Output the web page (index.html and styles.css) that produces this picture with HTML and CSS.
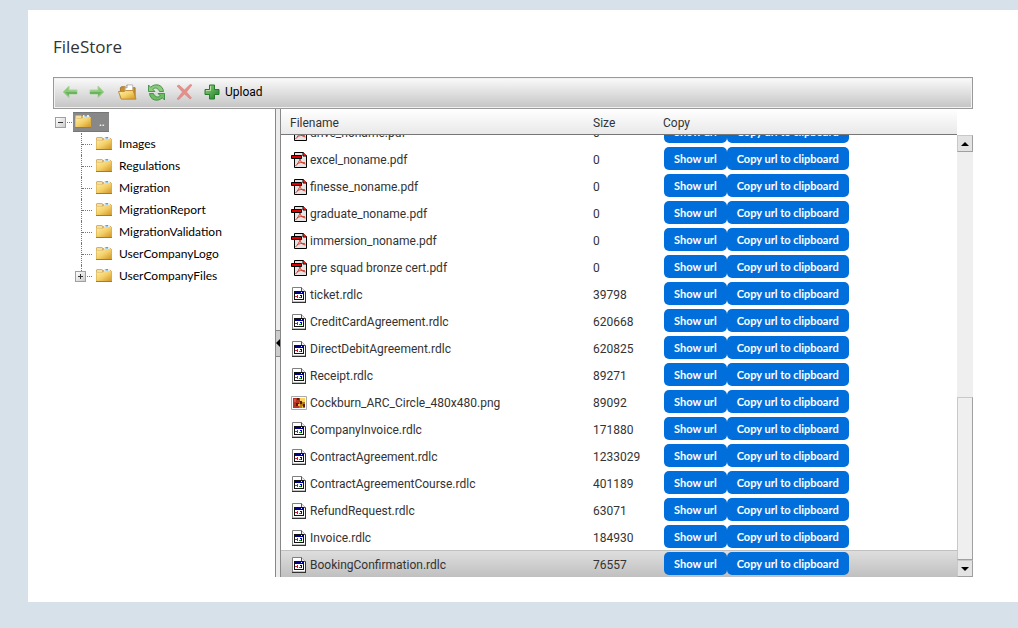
FILE: index.html
```html
<!DOCTYPE html>
<html lang="en">
<head>
<meta charset="utf-8">
<title>FileStore</title>
<link rel="stylesheet" href="styles.css">
</head>
<body>
<svg class="defs" aria-hidden="true">
  <defs>
    <linearGradient id="gold" x1="0" y1="0" x2="1" y2="1"><stop offset="0" stop-color="#fff0a8"/><stop offset=".5" stop-color="#f3cf68"/><stop offset="1" stop-color="#cf9220"/></linearGradient>
    <linearGradient id="green" x1="0" y1="0" x2="1" y2="1"><stop offset="0" stop-color="#8fd67c"/><stop offset="1" stop-color="#1c7a24"/></linearGradient>
    <symbol id="folder" viewBox="0 0 16 16">
      <path d="M0 12V2l1-1h5l1 1h8v10z" fill="#d6b06a"/>
      <path d="M8 1h6v3H8z" fill="#e8eef0"/><path d="M9.500 1h2.500v1.500H9.500z" fill="#48a6dc"/>
      <path d="M1 2h5v2H1z" fill="#f3dfa0"/>
      <path d="M0 13.500V4.500h7l1.500-1.500H16v10.500z" fill="url(#gold)"/>
      <path d="M.5 13V4.500M15.500 3v10" stroke="#d9ab4c" stroke-opacity=".6"/>
      <path d="M0 13.500h16" stroke="#b07a18"/>
    </symbol>
    <symbol id="pdf" viewBox="0 0 16 16">
      <path d="M3.500 .5h8.500l3.500 3.500v11.500h-12z" fill="#e4e4e4" stroke="#000"/>
      <path d="M12 0v4h4" fill="#e00000" stroke="#000"/><path d="M12.500 1l2.500 2.500h-2.500z" fill="#f22"/>
      <path d="M.5 3.500h10v3H.5z" fill="#e00000" stroke="#000"/>
      <path d="M9 7c-.5 2-2.500 5-4.500 7M9 7c.3 2.500 2 4.500 5.500 5M6 12c2-1.500 5-2 8-1.200" fill="none" stroke="#d43a2c"/>
    </symbol>
    <symbol id="rdlc" viewBox="0 0 16 16">
      <path d="M1.500 .5h9l4 4v10.500h-13z" fill="#fff" stroke="#808080"/>
      <path d="M14.500 4.500v11M1 15.500h14" fill="none" stroke="#333"/>
      <path d="M10.500 .5v4h4" fill="#eee" stroke="#555"/>
      <path d="M3 4h10v9H3z" fill="#111"/><path d="M4 7h8v5H4z" fill="#fff"/><path d="M4 5h8v2H4z" fill="#000090"/><path d="M10 5h1v1h-1z" fill="#fff"/>
      <path d="M4 9h1v1H4z" fill="#008f8f"/><path d="M6 8h1v3H6zM5 9h1v1H5z" fill="#d12"/><path d="M8 10h2v1H8z" fill="#0a0"/><path d="M9 8h2v1H9zM10 9h1v2h-1z" fill="#00c"/>
    </symbol>
    <symbol id="png" viewBox="0 0 16 16">
      <path d="M.5 1.500h15v13H.5z" fill="#fff" stroke="#aaa"/><path d="M2 3h12v10H2z" fill="#b83422"/>
      <path d="M9 3h5v5H9z" fill="#f5d35c"/><path d="M8 7h6v6H8z" fill="#b57b12"/><path d="M9 6h2v3H9zM12 9h2v3h-2zM5 8h3v3H5zM6 3h2v2H6z" fill="#5a1b13"/><path d="M3 4h2v3H3z" fill="#da5542"/><path d="M7 9h2v2H7zM11 11h1v2h-1z" fill="#f3bd30"/>
    </symbol>
  </defs>
</svg>
<main class="panel">
  <h1 class="title">FileStore</h1>
  <section class="explorer">
    <div class="toolbar" role="toolbar" aria-label="File actions">
      <button class="tool" type="button" aria-label="Back"><svg width="16" height="16" viewBox="0 0 16 16"><path d="M1 8l6-6v4h8v4H7v4z" fill="#8bc97b" stroke="#a9d69d"/><path d="M3 8h12v2H7v2z" fill="#6bb35f"/></svg></button>
      <button class="tool" type="button" aria-label="Forward"><svg width="16" height="16" viewBox="0 0 16 16"><path d="M15 8L9 2v4H1v4h8v4z" fill="#8bc97b" stroke="#a9d69d"/><path d="M13 8H1v2h8v2z" fill="#6bb35f"/></svg></button>
      <button class="tool tool-wide" type="button" aria-label="New folder"><svg width="19" height="16" viewBox="0 0 20 16"><path d="M2.500 14V3.500l1-1h4l1 1h9.500V14z" fill="#c98f2c" stroke="#a87628"/><path d="M7.500 9V3l2-2.500h6V9z" fill="#fff" stroke="#b5b5b5"/><path d="M7.500 3.500h2v-3" fill="none" stroke="#999"/><path d="M3.500 15.500L.5 7.500h6l1.500-1h8l3 9z" fill="url(#gold)" stroke="#be8930"/></svg></button>
      <button class="tool" type="button" aria-label="Refresh"><svg width="17" height="17" viewBox="0 0 17 17"><path d="M.5 1v6.500H7L4.800 5.300C7 3.200 10 3.800 11.500 7.500h4C15 1 7.500-1.500 2.700 3.200z" fill="#8ccb7b" stroke="#2f8735" stroke-width=".8"/><path d="M16.500 16V9.500H10l2.200 2.200C10 13.800 7 13.200 5.500 9.500h-4C2 16 9.500 18.500 14.300 13.800z" fill="#6fbd61" stroke="#2f8735" stroke-width=".8"/></svg></button>
      <button class="tool" type="button" aria-label="Delete"><svg width="17" height="16" viewBox="0 0 17 16"><path d="M1 2l2-1 5.500 5L14 .5 16 1l-5.500 7 5 6-1.500 1-5.500-5L3 15.500 1 15l5.500-7z" fill="#e58f8b" stroke="#d9827e" stroke-width=".6"/></svg></button>
      <button class="tool" type="button"><svg width="16" height="16" viewBox="0 0 16 16"><path d="M5.500 1h5v4.500H15v5h-4.500V15h-5v-4.500H1v-5h4.500z" fill="url(#green)" stroke="#267a2c"/><path d="M6.500 2v4.500H2" fill="none" stroke="#b7e3a9"/></svg><span>Upload</span></button>
    </div>
    <div class="panes">
      <nav class="tree" aria-label="Folders">
        <div class="root"><button class="expander" type="button" aria-label="Collapse root"></button><span class="dots"></span><a class="root-link" href="#root"><svg class="icon"><use href="#folder"/></svg><span>..</span></a></div>
        <ul class="children">
          <li class="node"><a class="node-link" href="#images"><svg class="icon"><use href="#folder"/></svg>Images</a></li>
          <li class="node"><a class="node-link" href="#regulations"><svg class="icon"><use href="#folder"/></svg>Regulations</a></li>
          <li class="node"><a class="node-link" href="#migration"><svg class="icon"><use href="#folder"/></svg>Migration</a></li>
          <li class="node"><a class="node-link" href="#migrationreport"><svg class="icon"><use href="#folder"/></svg>MigrationReport</a></li>
          <li class="node"><a class="node-link" href="#migrationvalidation"><svg class="icon"><use href="#folder"/></svg>MigrationValidation</a></li>
          <li class="node"><a class="node-link" href="#usercompanylogo"><svg class="icon"><use href="#folder"/></svg>UserCompanyLogo</a></li>
          <li class="node"><button class="expander plus child-expander" type="button" aria-label="Expand UserCompanyFiles"></button><a class="node-link" href="#usercompanyfiles"><svg class="icon"><use href="#folder"/></svg>UserCompanyFiles</a></li>
        </ul>
      </nav>
      <div class="splitter"><button class="collapse" type="button" aria-label="Collapse folder pane"><svg width="4" height="8" viewBox="0 0 4 8"><path d="M4 0v8L0 4z"/></svg></button></div>
      <div class="list">
        <table class="grid head">
          <colgroup><col class="col-name"><col class="col-size"><col></colgroup>
          <thead><tr><th>Filename</th><th>Size</th><th>Copy</th></tr></thead>
        </table>
        <div class="rows">
          <div class="viewport">
            <table class="grid body">
              <colgroup><col class="col-name"><col class="col-size"><col></colgroup>
              <tbody>
                <tr><td><div class="file"><svg class="icon"><use href="#pdf"/></svg>drive_noname.pdf</div></td><td>0</td><td><div class="actions"><button class="btn" type="button">Show url</button><button class="btn" type="button">Copy url to clipboard</button></div></td></tr>
                <tr><td><div class="file"><svg class="icon"><use href="#pdf"/></svg>excel_noname.pdf</div></td><td>0</td><td><div class="actions"><button class="btn" type="button">Show url</button><button class="btn" type="button">Copy url to clipboard</button></div></td></tr>
                <tr><td><div class="file"><svg class="icon"><use href="#pdf"/></svg>finesse_noname.pdf</div></td><td>0</td><td><div class="actions"><button class="btn" type="button">Show url</button><button class="btn" type="button">Copy url to clipboard</button></div></td></tr>
                <tr><td><div class="file"><svg class="icon"><use href="#pdf"/></svg>graduate_noname.pdf</div></td><td>0</td><td><div class="actions"><button class="btn" type="button">Show url</button><button class="btn" type="button">Copy url to clipboard</button></div></td></tr>
                <tr><td><div class="file"><svg class="icon"><use href="#pdf"/></svg>immersion_noname.pdf</div></td><td>0</td><td><div class="actions"><button class="btn" type="button">Show url</button><button class="btn" type="button">Copy url to clipboard</button></div></td></tr>
                <tr><td><div class="file"><svg class="icon"><use href="#pdf"/></svg>pre squad bronze cert.pdf</div></td><td>0</td><td><div class="actions"><button class="btn" type="button">Show url</button><button class="btn" type="button">Copy url to clipboard</button></div></td></tr>
                <tr><td><div class="file"><svg class="icon"><use href="#rdlc"/></svg>ticket.rdlc</div></td><td>39798</td><td><div class="actions"><button class="btn" type="button">Show url</button><button class="btn" type="button">Copy url to clipboard</button></div></td></tr>
                <tr><td><div class="file"><svg class="icon"><use href="#rdlc"/></svg>CreditCardAgreement.rdlc</div></td><td>620668</td><td><div class="actions"><button class="btn" type="button">Show url</button><button class="btn" type="button">Copy url to clipboard</button></div></td></tr>
                <tr><td><div class="file"><svg class="icon"><use href="#rdlc"/></svg>DirectDebitAgreement.rdlc</div></td><td>620825</td><td><div class="actions"><button class="btn" type="button">Show url</button><button class="btn" type="button">Copy url to clipboard</button></div></td></tr>
                <tr><td><div class="file"><svg class="icon"><use href="#rdlc"/></svg>Receipt.rdlc</div></td><td>89271</td><td><div class="actions"><button class="btn" type="button">Show url</button><button class="btn" type="button">Copy url to clipboard</button></div></td></tr>
                <tr><td><div class="file"><svg class="icon"><use href="#png"/></svg>Cockburn_ARC_Circle_480x480.png</div></td><td>89092</td><td><div class="actions"><button class="btn" type="button">Show url</button><button class="btn" type="button">Copy url to clipboard</button></div></td></tr>
                <tr><td><div class="file"><svg class="icon"><use href="#rdlc"/></svg>CompanyInvoice.rdlc</div></td><td>171880</td><td><div class="actions"><button class="btn" type="button">Show url</button><button class="btn" type="button">Copy url to clipboard</button></div></td></tr>
                <tr><td><div class="file"><svg class="icon"><use href="#rdlc"/></svg>ContractAgreement.rdlc</div></td><td>1233029</td><td><div class="actions"><button class="btn" type="button">Show url</button><button class="btn" type="button">Copy url to clipboard</button></div></td></tr>
                <tr><td><div class="file"><svg class="icon"><use href="#rdlc"/></svg>ContractAgreementCourse.rdlc</div></td><td>401189</td><td><div class="actions"><button class="btn" type="button">Show url</button><button class="btn" type="button">Copy url to clipboard</button></div></td></tr>
                <tr><td><div class="file"><svg class="icon"><use href="#rdlc"/></svg>RefundRequest.rdlc</div></td><td>63071</td><td><div class="actions"><button class="btn" type="button">Show url</button><button class="btn" type="button">Copy url to clipboard</button></div></td></tr>
                <tr><td><div class="file"><svg class="icon"><use href="#rdlc"/></svg>Invoice.rdlc</div></td><td>184930</td><td><div class="actions"><button class="btn" type="button">Show url</button><button class="btn" type="button">Copy url to clipboard</button></div></td></tr>
                <tr class="selected"><td><div class="file"><svg class="icon"><use href="#rdlc"/></svg>BookingConfirmation.rdlc</div></td><td>76557</td><td><div class="actions"><button class="btn" type="button">Show url</button><button class="btn" type="button">Copy url to clipboard</button></div></td></tr>
              </tbody>
            </table>
          </div>
          <div class="scrollbar">
            <button class="arrow" type="button" aria-label="Scroll up"><svg width="8" height="4" viewBox="0 0 8 4"><path d="M4 0l4 4H0z"/></svg></button>
            <div class="track"><div class="thumb"></div></div>
            <button class="arrow" type="button" aria-label="Scroll down"><svg width="8" height="4" viewBox="0 0 8 4"><path d="M0 0h8L4 4z"/></svg></button>
          </div>
        </div>
      </div>
    </div>
  </section>
</main>
</body>
</html>
```
FILE: styles.css
```css
* { box-sizing: border-box; }
body {
  margin: 0;
  padding: 10px 0 26px 28px;
  min-height: 100vh;
  display: flex;
  background: #d7e1e9;
  color: #333;
  font: 12px/16px Roboto, "Open Sans", sans-serif;
}
button { font: inherit; color: inherit; margin: 0; padding: 0; border: 0; background: none; }
a { color: inherit; text-decoration: none; }
svg { display: block; flex: none; }
.defs { position: absolute; width: 0; height: 0; }
.icon { width: 16px; height: 16px; }

.panel {
  flex: 1;
  min-width: 0;
  padding: 25px 45px 25px 25px;
  background: #fff;
  display: flex;
  flex-direction: column;
}
.title { margin: 0 0 18px; font: 400 17px/24px "Open Sans", sans-serif; }
.explorer { flex: 1; display: flex; flex-direction: column; min-height: 0; }

.toolbar {
  display: flex;
  align-items: center;
  gap: 11px;
  height: 32px;
  padding: 0 8px 2px;
  border: 1px solid #999;
  box-shadow: inset 0 0 0 1px #f2f2f2;
  background: linear-gradient(#fafafa, #c4c4c4);
  color: #000;
}
.tool { display: flex; align-items: center; gap: 5px; }
.tool-wide { margin: 0 0 0 2px; }

.panes { flex: 1; display: flex; min-height: 0; }
.tree { width: 222px; flex: none; padding: 2px 0 0 2px; color: #000; overflow: hidden; font-family: Lato, sans-serif; }
.root { display: flex; align-items: center; height: 22px; }
.root-link {
  display: flex;
  align-items: center;
  gap: 8px;
  height: 20px;
  padding: 0 4px 0 2px;
  background: #888;
  border: 1px solid #777;
  border-width: 1px 0;
  color: #fff;
}
.expander {
  width: 11px;
  height: 11px;
  border: 1px solid #a0a0a0;
  background: linear-gradient(#333, #333) center / 5px 1px no-repeat, linear-gradient(135deg, #fff, #ccc);
}
.plus { background: linear-gradient(#333, #333) center / 5px 1px no-repeat, linear-gradient(#333, #333) center / 1px 5px no-repeat, linear-gradient(135deg, #fff, #ccc); }
.dots { width: 5px; margin: 0 1px; border-top: 1px dotted #777; }
.children { list-style: none; margin: 0 0 0 26px; padding: 0; }
.node { position: relative; display: flex; align-items: center; height: 22px; }
.node::before { content: ""; width: 10px; height: 22px; border-left: 1px dotted #777; }
.node::after { content: ""; position: absolute; left: 1px; top: 11px; width: 10px; border-top: 1px dotted #777; }
.node:last-child::before { height: 12px; align-self: flex-start; }
.node-link { display: flex; align-items: center; gap: 7px; padding-left: 4px; }
.child-expander { position: absolute; left: -6px; top: 6px; z-index: 1; }

.splitter {
  width: 6px;
  flex: none;
  display: flex;
  align-items: center;
  border: 1px solid #888;
  border-width: 0 1px;
  background: #ececec;
}
.collapse { width: 4px; height: 27px; border: 1px solid #888; border-width: 1px 0; background: #ccc; }

.list { flex: 1; min-width: 0; display: flex; flex-direction: column; }
.grid { width: 100%; table-layout: fixed; border-collapse: separate; border-spacing: 0; }
.col-name { width: 303px; }
.col-size { width: 70px; }
.grid th, .grid td { padding: 2px 0 0 9px; text-align: left; font-weight: 400; }
.head { width: auto; margin-right: 16px; background: linear-gradient(#fff, #e8e8e8); }
.grid th { height: 26px; border-bottom: 1px solid #777; }
.rows { flex: 1; display: flex; min-height: 0; }
.viewport { flex: 1; min-width: 0; height: 442px; overflow: hidden; display: flex; flex-direction: column; justify-content: flex-end; }
.grid td { height: 27px; border-top: 1px solid transparent; }
.grid td:last-child { padding-top: 1px; vertical-align: top; }
.selected { background: linear-gradient(#dfdfdf, #c0c0c0); }
.grid .selected td { border-color: #c0c0c0; }
.file { display: flex; align-items: center; gap: 3px; padding-left: 1px; white-space: nowrap; }
.actions { display: flex; padding-left: 1px; }
.btn {
  height: 23px;
  padding: 0 10px;
  border-radius: 5px;
  background: #006fdb;
  color: #fff;
  font-family: Lato, sans-serif;
  font-size: 11px;
  font-weight: 700;
  white-space: nowrap;
}

.scrollbar { width: 16px; flex: none; display: flex; flex-direction: column; background: #efefef; }
.arrow {
  height: 17px;
  display: flex;
  align-items: center;
  justify-content: center;
  border: 1px solid;
  border-color: #c8c8c8 #a0a0a0 #a0a0a0 #c8c8c8;
  background: #e3e3e3;
}
.track { flex: 1; display: flex; align-items: flex-end; }
.thumb { width: 100%; height: 40%; border: 1px solid; border-color: #c8c8c8 #a0a0a0 #a0a0a0 #c8c8c8; }
```
